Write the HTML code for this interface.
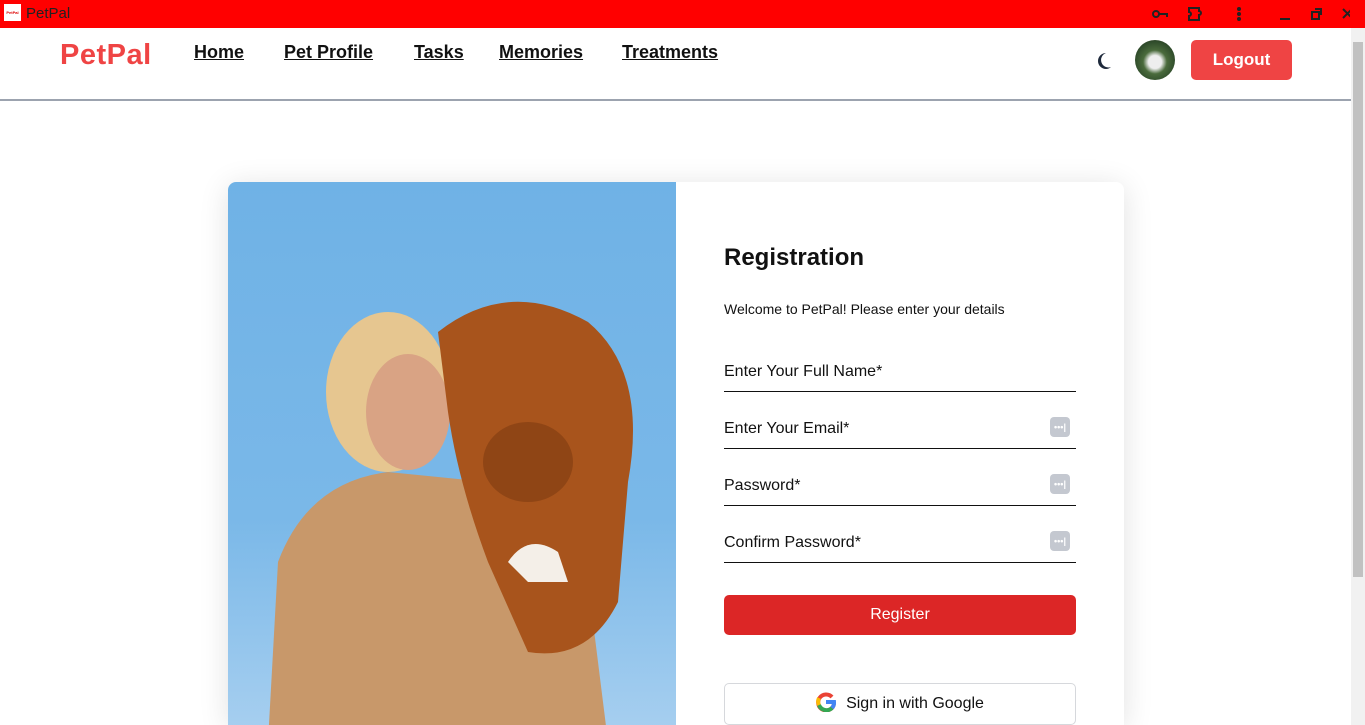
<!DOCTYPE html>
<html><head><meta charset="utf-8"><style>
*{margin:0;padding:0;box-sizing:border-box}
body{width:1365px;height:725px;overflow:hidden;font-family:"Liberation Sans","DejaVu Sans",sans-serif;background:#fff;position:relative;color:#111}
.tb{position:absolute;left:0;top:0;width:1365px;height:28px;background:#ff0000}
.tb .ic{position:absolute;left:4px;top:4px;width:17px;height:17px;background:#fff;font-size:4px;color:#d00;font-weight:bold;line-height:17px;text-align:center}
.tb .t{position:absolute;left:26px;top:5px;font-size:15px;color:#222}
.sb{position:absolute;right:0;top:28px;width:14px;height:697px;background:#f1f1f1}
.sb div{position:absolute;left:2px;top:14px;width:10px;height:535px;background:#c1c1c1}
.hd{position:absolute;left:0;top:28px;width:1351px;height:73px;border-bottom:2px solid #9ca3af}
.logo{position:absolute;left:60px;top:11px;font-size:29px;font-weight:bold;color:#ef4444;letter-spacing:0.5px}
.nav a{position:absolute;top:14px;font-size:18px;color:#111;text-decoration:underline;font-weight:bold;-webkit-text-stroke:0}
.logout{position:absolute;left:1191px;top:12px;width:101px;height:40px;background:#ef4444;border-radius:5px;color:#fff;font-size:17px;text-align:center;line-height:40px;font-weight:bold}
.av{position:absolute;left:1135px;top:12px;width:40px;height:40px;border-radius:50%;background:radial-gradient(circle at 50% 55%,#eee 0 22%,#4a6b3c 40%,#2e4a2a 70%,#5a4a3a)}
.card{position:absolute;left:228px;top:182px;width:896px;height:543px;background:#fff;border-radius:8px 8px 0 0;box-shadow:0 4px 30px rgba(0,0,0,.12);overflow:hidden}
.img{position:absolute;left:0;top:0;width:448px;height:560px;background:linear-gradient(180deg,#6fb2e6,#7ab8e8 60%,#a9d0f0)}
h1{position:absolute;left:496px;top:62px;font-size:24px;font-weight:bold}
.sub{position:absolute;left:496px;top:119px;font-size:14px}
.f{position:absolute;left:496px;width:352px;height:40px;border-bottom:1.5px solid #111;font-size:16px;padding-top:11px}
.f i{position:absolute;right:6px;top:8px;width:20px;height:20px;background:#c4c8d0;border-radius:4px;font-style:normal;color:#fff;font-size:9px;line-height:20px;text-align:center;font-weight:bold}
.reg{position:absolute;left:496px;top:413px;width:352px;height:40px;background:#dc2626;border-radius:5px;color:#fff;text-align:center;line-height:40px;font-size:16px}
.g{position:absolute;left:496px;top:501px;width:352px;height:42px;border:1px solid #d6d8dc;border-radius:5px;text-align:center;line-height:40px;font-size:16px}
</style></head><body>
<div class="tb"><div class="ic">PetPal</div><div class="t">PetPal</div>
<svg style="position:absolute;left:1150px;top:6px" width="200" height="16" fill="none" stroke="#222" stroke-width="2"><circle cx="6" cy="8" r="3"/><path d="M9 8h8v3"/><path d="M43 2h6v3a2 2 0 010 4v5H39v-4a2 2 0 000-4V2z"/><circle cx="89" cy="3" r="1" fill="#222"/><circle cx="89" cy="8" r="1" fill="#222"/><circle cx="89" cy="13" r="1" fill="#222"/><path d="M130 13h10M162 6h7v7h-7zM165 3h6v6M193 3l9 9M202 3l-9 9"/></svg></div>
<div class="sb"><div></div></div>
<div class="hd">
<div class="logo">PetPal</div>
<div class="nav"><a style="left:194px">Home</a><a style="left:284px">Pet Profile</a><a style="left:414px">Tasks</a><a style="left:499px">Memories</a><a style="left:622px">Treatments</a></div>
<svg style="position:absolute;left:1094px;top:24px" width="18" height="18"><path d="M12 1a8 8 0 100 16 8 8 0 005-2 7 7 0 01-5-14z" fill="#1e293b"/></svg>
<div class="av"></div>
<div class="logout">Logout</div>
</div>
<div class="card">
<div class="img">
<svg width="448" height="560" viewBox="0 0 448 560">
<path d="M40 560 L50 380 Q80 300 160 290 L260 300 Q340 330 360 400 L380 560Z" fill="#c8986a"/>
<ellipse cx="160" cy="210" rx="62" ry="80" fill="#e6c690"/>
<ellipse cx="180" cy="230" rx="42" ry="58" fill="#d9a384"/>
<path d="M210 150 Q280 95 360 140 Q420 190 400 300 L390 420 Q360 480 300 470 L260 380 Q230 300 220 230Z" fill="#a8541c"/>
<ellipse cx="300" cy="280" rx="45" ry="40" fill="#8f4515"/>
<path d="M280 380 Q300 350 330 370 L340 400 L300 400Z" fill="#f4efe8"/>
</svg>
</div>
<h1>Registration</h1>
<div class="sub">Welcome to PetPal! Please enter your details</div>
<div class="f" style="top:170px">Enter Your Full Name*</div>
<div class="f" style="top:227px">Enter Your Email*<i>•••|</i></div>
<div class="f" style="top:284px">Password*<i>•••|</i></div>
<div class="f" style="top:341px">Confirm Password*<i>•••|</i></div>
<div class="reg">Register</div>
<div class="g"><svg style="vertical-align:-4px;margin-right:10px" width="20" height="20" viewBox="0 0 20 20" fill="none" stroke-width="4"><path d="M16 5a8 8 0 10 2 7" stroke="#ea4335"/><path d="M3 13a8 8 0 0013 3" stroke="#34a853"/><path d="M10 10h8a8 8 0 01-2 6" stroke="#4285f4"/><path d="M3 6a8 8 0 000 7" stroke="#fbbc05"/></svg>Sign in with Google</div>
</div>
</body></html>
